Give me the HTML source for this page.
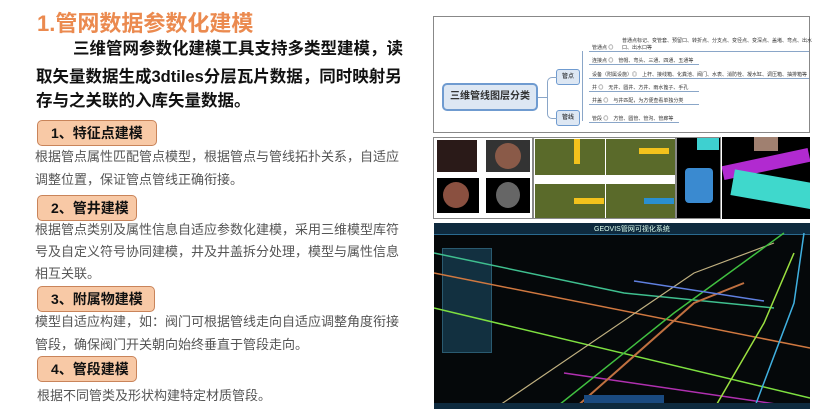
<!DOCTYPE html>
<html><head><meta charset="utf-8"><style>
*{margin:0;padding:0;box-sizing:border-box}
body{width:840px;height:410px;background:#fff;position:relative;overflow:hidden;font-family:"Liberation Sans","Noto Sans CJK SC",sans-serif}
.a{position:absolute;white-space:nowrap}
.t{left:37px;top:6px;font-size:22px;font-weight:bold;color:#EB8A4F}
.p{left:36px;font-size:16.5px;font-weight:bold;color:#111;line-height:24px}
.box{position:absolute;left:37px;height:26px;background:#F8C9A6;border:1px solid #C9845A;border-radius:5px;font-size:14px;font-weight:bold;color:#111;line-height:24px;padding-left:13px}
.d{left:35px;font-size:13px;color:#555;line-height:22px}
.mm{position:absolute;left:433px;top:16px;width:377px;height:117px;border:1px solid #888;background:#fff}
.s{position:absolute;font-size:5px;color:#333;white-space:nowrap}
.ln{position:absolute;height:1px;background:#8aa6c8}
</style></head><body>
<div class="a t">1.管网数据参数化建模</div>
<div class="a p" style="top:37px;left:73px">三维管网参数化建模工具支持多类型建模，读</div>
<div class="a p" style="top:65px">取矢量数据生成3dtiles分层瓦片数据，同时映射另</div>
<div class="a p" style="top:89px">存与之关联的入库矢量数据。</div>
<div class="box" style="top:120px;width:120px">1、特征点建模</div>
<div class="a d" style="top:146px">根据管点属性匹配管点模型，根据管点与管线拓扑关系，自适应</div>
<div class="a d" style="top:169px">调整位置，保证管点管线正确衔接。</div>
<div class="box" style="top:195px;width:100px">2、管井建模</div>
<div class="a d" style="top:219px">根据管点类别及属性信息自适应参数化建模，采用三维模型库符</div>
<div class="a d" style="top:241px">号及自定义符号协同建模，井及井盖拆分处理，模型与属性信息</div>
<div class="a d" style="top:263px">相互关联。</div>
<div class="box" style="top:286px;width:118px">3、附属物建模</div>
<div class="a d" style="top:311px">模型自适应构建，如：阀门可根据管线走向自适应调整角度衔接</div>
<div class="a d" style="top:334px">管段，确保阀门开关朝向始终垂直于管段走向。</div>
<div class="box" style="top:356px;width:100px">4、管段建模</div>
<div class="a d" style="top:385px;left:37px">根据不同管类及形状构建特定材质管段。</div>

<div class="mm">
 <div style="position:absolute;left:8px;top:66px;width:96px;height:28px;border:2px solid #6f9bd0;border-radius:5px;background:#dde7f3;font-size:10px;font-weight:bold;color:#333;text-align:center;line-height:24px">三维管线图层分类</div>
 <div style="position:absolute;left:122px;top:52px;width:24px;height:16px;border:1px solid #6f9bd0;border-radius:3px;background:#dde7f3;font-size:6px;text-align:center;line-height:14px">管点</div>
 <div style="position:absolute;left:122px;top:93px;width:24px;height:16px;border:1px solid #6f9bd0;border-radius:3px;background:#dde7f3;font-size:6px;text-align:center;line-height:14px">管线</div>
 <div class="ln" style="left:104px;top:80px;width:10px"></div>
 <div style="position:absolute;left:113px;top:60px;width:10px;height:42px;border:1px solid #8aa6c8;border-right:none;border-radius:5px 0 0 5px"></div>
 <div style="position:absolute;left:148px;top:34px;width:6px;height:70px;border-left:1px solid #8aa6c8"></div>
 <div class="s" style="left:158px;top:27px">管通点 ◎ </div><div class="s" style="left:188px;top:20px">普通点标记、变管套、预留口、转折点、分支点、变径点、变深点、盖堵、弯点、出水</div><div class="s" style="left:188px;top:27px">口、出水口等</div>
 <div class="ln" style="left:155px;top:34px;width:220px"></div>
 <div class="s" style="left:158px;top:40px">连接点 ◎　管帽、弯头、三通、四通、五通等</div>
 <div class="ln" style="left:155px;top:47px;width:110px"></div>
 <div class="s" style="left:158px;top:54px">设备（附属设施）◎　上杆、接线箱、化粪池、阀门、水表、消防栓、凝水缸、调压箱、抽排箱等</div>
 <div class="ln" style="left:155px;top:61px;width:220px"></div>
 <div class="s" style="left:158px;top:67px">井 ◎　无井、圆井、方井、雨水篦子、手孔</div>
 <div class="ln" style="left:155px;top:74px;width:110px"></div>
 <div class="s" style="left:158px;top:80px">井盖 ◎　与井匹配，为方便查看单独分类</div>
 <div class="ln" style="left:155px;top:87px;width:110px"></div>
 <div class="s" style="left:158px;top:98px">管段 ◎　方管、圆管、管沟、管廊等</div>
 <div class="ln" style="left:155px;top:105px;width:90px"></div>
</div>

<div style="position:absolute;left:433px;top:137px;width:100px;height:82px;border:1px solid #888;background:#fff">
 <div style="position:absolute;left:3px;top:2px;width:40px;height:32px;background:#2a1a18"></div>
 <div style="position:absolute;left:52px;top:2px;width:44px;height:32px;background:#333"><div style="margin:3px auto;width:26px;height:26px;border-radius:50%;background:#8a5a48"></div></div>
 <div style="position:absolute;left:3px;top:40px;width:42px;height:35px;background:#000"><div style="margin:4px 6px;width:26px;height:26px;border-radius:50%;background:#8a5040"></div></div>
 <div style="position:absolute;left:52px;top:40px;width:44px;height:35px;background:#000"><div style="margin:4px 10px;width:24px;height:26px;border-radius:50%;background:#666"></div></div>
</div>
<div style="position:absolute;left:533px;top:137px;width:143px;height:82px;background:#fff;border:1px solid #888;overflow:hidden">
 <div style="position:absolute;left:1px;top:1px;width:70px;height:36px;background:#5a6a2a"></div>
 <div style="position:absolute;left:72px;top:1px;width:69px;height:36px;background:#5a6a2a"></div>
 <div style="position:absolute;left:1px;top:46px;width:70px;height:34px;background:#5a6a2a"></div>
 <div style="position:absolute;left:72px;top:46px;width:69px;height:34px;background:#5a6a2a"></div>
 <div style="position:absolute;left:40px;top:1px;width:6px;height:25px;background:#f3c21c"></div>
 <div style="position:absolute;left:105px;top:10px;width:30px;height:6px;background:#f3c21c"></div>
 <div style="position:absolute;left:40px;top:60px;width:30px;height:6px;background:#f3c21c"></div>
 <div style="position:absolute;left:110px;top:60px;width:30px;height:6px;background:#2a8fd0"></div>
</div>
<div style="position:absolute;left:676px;top:137px;width:45px;height:82px;background:#000;border:1px solid #888;overflow:hidden"><div style="position:absolute;left:8px;top:30px;width:28px;height:35px;background:#3a8ad0;border-radius:4px"></div><div style="position:absolute;left:20px;top:0;width:22px;height:12px;background:#3ed0d0"></div></div>
<div style="position:absolute;left:722px;top:137px;width:88px;height:82px;background:#000;overflow:hidden">
 <div style="position:absolute;left:0;top:20px;width:88px;height:14px;background:#b12ad0;transform:rotate(-12deg)"></div>
 <div style="position:absolute;left:10px;top:40px;width:90px;height:26px;background:#3fd8cc;transform:rotate(10deg)"></div>
 <div style="position:absolute;left:32px;top:0;width:24px;height:14px;background:#a08070"></div>
</div>

<div style="position:absolute;left:434px;top:223px;width:376px;height:186px;background:#05080a;overflow:hidden">
 <div style="position:absolute;left:0;top:0;width:376px;height:12px;background:#0e2a3e;border-bottom:1px solid #2a6a90"></div>
 <div class="a" style="left:160px;top:1px;font-size:7px;color:#dfe;">GEOVIS管网可视化系统</div>
 <div style="position:absolute;left:8px;top:25px;width:50px;height:105px;background:#123040;border:1px solid #2a5a70"></div>
 <svg width="376" height="186" style="position:absolute;left:0;top:0">
  <path d="M0 30 L190 70 L340 85" stroke="#3fbf8f" stroke-width="1.5" fill="none"/>
  <path d="M0 50 L376 125" stroke="#d07840" stroke-width="1.5" fill="none"/>
  <path d="M0 85 L376 175" stroke="#7ee040" stroke-width="1.5" fill="none"/>
  <path d="M130 150 L376 186" stroke="#b030b0" stroke-width="1.5" fill="none"/>
  <path d="M60 186 L260 50 L340 20" stroke="#c0b080" stroke-width="1.2" fill="none"/>
  <path d="M120 186 L240 90 L350 10" stroke="#40c040" stroke-width="1.5" fill="none"/>
  <path d="M140 186 L260 80 L310 60" stroke="#c07040" stroke-width="2" fill="none"/>
  <path d="M280 186 L330 100 L360 30" stroke="#9be040" stroke-width="1.5" fill="none"/>
  <path d="M320 186 L360 80 L370 10" stroke="#40b0e0" stroke-width="1.5" fill="none"/>
  <path d="M200 58 L330 78" stroke="#6080e0" stroke-width="1.5" fill="none"/>
 </svg>
 <div style="position:absolute;left:150px;top:172px;width:80px;height:8px;background:#1a4a80"></div>
 <div style="position:absolute;left:0;top:180px;width:376px;height:6px;background:#0e2a3e"></div>
</div>
</body></html>
